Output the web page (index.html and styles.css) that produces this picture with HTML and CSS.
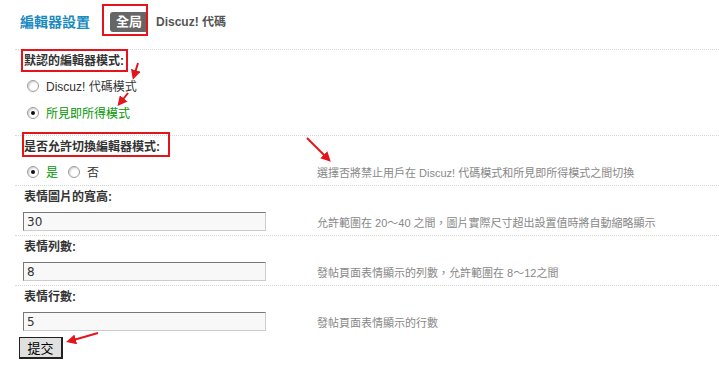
FILE: index.html
```html
<!DOCTYPE html>
<html lang="zh-Hant">
<head>
    <meta charset="UTF-8">
    <title>編輯器設置</title>
    <link rel="stylesheet" href="styles.css">
</head>
<body>
    <div class="page">
        <div class="tabs">
            <h3 class="title">編輯器設置</h3>
            <span class="tab current">全局</span>
            <a class="tab">Discuz! 代碼</a>
        </div>

        <div class="form">
            <div class="item">
                <div class="label">默認的編輯器模式:</div>
                <div class="row">
                    <ul class="radios list">
                        <li><input type="radio" name="mode"> <span>Discuz! 代碼模式</span></li>
                        <li class="on"><input type="radio" name="mode" checked> <span>所見即所得模式</span></li>
                    </ul>
                    <div class="desc"></div>
                </div>
            </div>

            <div class="item">
                <div class="label">是否允許切換編輯器模式:</div>
                <div class="row">
                    <ul class="radios inline">
                        <li class="on"><input type="radio" name="allow" checked> <span>是</span></li>
                        <li><input type="radio" name="allow"> <span>否</span></li>
                    </ul>
                    <div class="desc">選擇否將禁止用戶在 Discuz! 代碼模式和所見即所得模式之間切換</div>
                </div>
            </div>

            <div class="item">
                <div class="label">表情圖片的寬高:</div>
                <div class="row">
                    <div><input class="txt" type="text" value="30"></div>
                    <div class="desc">允許範圍在 20～40 之間，圖片實際尺寸超出設置值時將自動縮略顯示</div>
                </div>
            </div>

            <div class="item">
                <div class="label">表情列數:</div>
                <div class="row">
                    <div><input class="txt" type="text" value="8"></div>
                    <div class="desc">發帖頁面表情顯示的列數，允許範圍在 8～12之間</div>
                </div>
            </div>

            <div class="item">
                <div class="label">表情行數:</div>
                <div class="row">
                    <div><input class="txt" type="text" value="5"></div>
                    <div class="desc">發帖頁面表情顯示的行數</div>
                </div>
            </div>

            <div class="submit"><button class="btn">提交</button></div>
        </div>
    </div>

    <!-- annotation marks drawn over the form -->
    <svg class="marks" width="719" height="391" viewBox="0 0 719 391">
        <defs>
            <marker id="head" markerWidth="5" markerHeight="5" refX="3" refY="2.5" orient="auto" markerUnits="strokeWidth">
                <path d="M0,0 L5,2.5 L0,5 Z" fill="#e4141b"/>
            </marker>
        </defs>
        <g fill="none" stroke="#e4141b" stroke-width="2">
            <rect x="103" y="5" width="44" height="30"/>
            <rect x="22" y="50" width="105" height="21"/>
            <rect x="23" y="133" width="146" height="23"/>
        </g>
        <g stroke="#e4141b" stroke-width="2" marker-end="url(#head)">
            <line x1="138" y1="63" x2="134" y2="76"/>
            <line x1="128" y1="93" x2="120" y2="103"/>
            <line x1="307" y1="138" x2="328" y2="159"/>
            <line x1="98" y1="333" x2="70" y2="341"/>
        </g>
    </svg>
</body>
</html>
```

FILE: styles.css
```css
body {
    margin: 0;
    font: 12px "Liberation Sans", "Noto Sans CJK TC", sans-serif;
    color: #333;
    background: #fff;
}
.page { margin-left: 15px; }

.tabs {
    height: 49px;
    box-sizing: border-box;
    padding: 12px 0 0 5px;
    display: flex;
    align-items: flex-start;
}
.title {
    margin: 0 20px 0 0;
    height: 20px;
    line-height: 20px;
    font-size: 14px;
    font-weight: bold;
    color: #1a8ac0;
}
.tab {
    height: 20px;
    line-height: 20px;
    font-weight: bold;
    color: #555;
    text-decoration: none;
}
.tab.current {
    margin-right: 8px;
    padding: 0 6px;
    background: #666;
    color: #fff;
    border-radius: 3px;
    font-size: 13px;
}

.item { border-top: 1px dotted #d6d6d6; }
.label {
    height: 22px;
    line-height: 22px;
    padding-left: 9px;
    font-weight: bold;
    color: #333;
}
.row {
    display: grid;
    grid-template-columns: 294px 1fr;
    align-items: center;
    padding-left: 8px;
    min-height: 27px;
}
.desc { color: #888; font-size: 11px; }

.radios { list-style: none; margin: 0; padding: 0; }
.radios li { display: flex; align-items: center; }
.radios.list { padding-bottom: 9px; }
.radios.list li { height: 27px; }
.radios.inline { display: flex; height: 26px; }
.radios.inline li { margin-right: 6px; }
.radios .on span { color: #090; }
.radios input {
    appearance: none;
    width: 12px;
    height: 12px;
    margin: 0 7px 0 4px;
    border: 1px solid #9a9a9a;
    border-radius: 50%;
    background: #fff;
    box-shadow: inset 1px 1px 2px #ccc;
    display: grid;
    place-content: center;
}
.radios input:checked::after {
    content: "";
    width: 4px;
    height: 4px;
    border-radius: 50%;
    background: #111;
}

.txt {
    box-sizing: border-box;
    width: 243px;
    height: 19px;
    margin: 4px 0;
    padding: 0 3px;
    border: 1px solid #ccc;
    border-top-color: #777;
    border-left-color: #777;
    background: #f8f8f8;
    font: 12px "DejaVu Sans", sans-serif;
    color: #333;
}

.submit { padding: 2px 0 0 4px; }
.btn {
    width: 44px;
    height: 22px;
    padding: 0;
    border: 1px solid #222;
    border-right-width: 2px;
    border-bottom-width: 2px;
    background: #e0e0e0;
    font: 13px "Noto Sans CJK TC", sans-serif;
    color: #000;
}

.marks {
    position: absolute;
    top: 0;
    left: 0;
    pointer-events: none;
}
```
